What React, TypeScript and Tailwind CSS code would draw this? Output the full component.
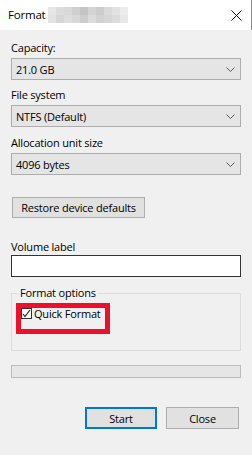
import React from 'react';

const font = { fontFamily: '"Open Sans", "Noto Sans", sans-serif' };

const Chevron: React.FC = () => (
  <svg width="9" height="5" viewBox="0 0 9 5" className="shrink-0">
    <polyline points="0.5,0.5 4.5,4.5 8.5,0.5" fill="none" stroke="#5a5a5a" strokeWidth="1" />
  </svg>
);

const Combo: React.FC<{ value: string }> = ({ value }) => (
  <div className="flex h-[22px] items-center justify-between border border-[#adadad] bg-[#e5e5e5] pl-[4px] pr-[5px]">
    <span className="text-[11px] tracking-[-0.2px] leading-none text-black">{value}</span>
    <Chevron />
  </div>
);

const Label: React.FC<{ text: string; className?: string }> = ({ text, className }) => (
  <div className={`h-[15px] text-[11px] tracking-[-0.2px] leading-[15px] text-black ${className ?? ''}`}>{text}</div>
);

// pixelated blur blocks that hide the drive name in the title
const blur = [
  ['#e6e6e6', '#dcdcdc', '#d9d9d9', '#cfcfcf', '#c4c4c4', '#d4d4d4', '#cccccc', '#dadada', '#e2e2e2', '#ececec'],
  ['#e2e2e2', '#d6d6d6', '#dedede', '#d8d8d8', '#cdcdcd', '#dcdcdc', '#d2d2d2', '#d6d6d6', '#dcdcdc', '#e8e8e8'],
];

const App: React.FC = () => {
  return (
    <div className="w-[252px] h-[455px] bg-[#f0f0f0] overflow-hidden" style={font}>
      <div className="flex h-[30px] items-center bg-white pl-[8px] pr-[9px] border-r border-[#8a8a8a]">
        <span className="w-[40px] text-[11.5px] tracking-[-0.2px] text-black">Format</span>
        <div className="flex flex-col">
          {blur.map((row, i) => (
            <div key={i} className="flex">
              {row.map((c, j) => (
                <div key={j} className="h-[8px] w-[8px]" style={{ backgroundColor: c }} />
              ))}
            </div>
          ))}
        </div>
        <svg width="11" height="11" viewBox="0 0 11 11" className="ml-auto">
          <path d="M0.5 0.5 L10.5 10.5 M10.5 0.5 L0.5 10.5" stroke="#111" strokeWidth="1" />
        </svg>
      </div>

      <div className="flex flex-col px-[11px]">
        <Label text="Capacity:" className="mt-[10px]" />
        <div className="mt-[3px]">
          <Combo value="21.0 GB" />
        </div>

        <Label text="File system" className="mt-[7px]" />
        <div className="mt-[3px]">
          <Combo value="NTFS (Default)" />
        </div>

        <Label text="Allocation unit size" className="mt-[8px]" />
        <div className="mt-[3px]">
          <Combo value="4096 bytes" />
        </div>

        <button className="mt-[22px] ml-[1px] h-[21px] w-[133px] border border-[#adadad] bg-[#e1e1e1] text-[11px] tracking-[-0.2px] leading-none text-black">
          Restore device defaults
        </button>

        <Label text="Volume label" className="mt-[21px]" />
        <div className="mt-[1px] h-[22px] border border-[#333] bg-white" />

        <div className="relative mt-[16px] h-[58px] border border-[#dcdcdc]">
          <span className="absolute -top-[9px] left-[6px] bg-[#f0f0f0] px-[2px] text-[11px] tracking-[-0.2px] leading-[15px] text-black">
            Format options
          </span>
          <div className="mt-[14px] ml-[9px] flex items-center gap-[2px]">
            <svg width="11" height="11" viewBox="0 0 11 11">
              <rect x="0.5" y="0.5" width="10" height="10" fill="#fff" stroke="#333" />
              <polyline points="2,6 4,8.5 9,2" fill="none" stroke="#222" strokeWidth="1.2" />
            </svg>
            <span className="text-[11px] tracking-[-0.2px] leading-none text-black">Quick Format</span>
          </div>
          {/* red annotation box */}
          <div className="absolute left-[4px] top-[9px] h-[31px] w-[94px] border-[5px] border-[#ee0f2a]" />
        </div>

        <div className="mt-[14px] h-[13px] border border-[#bcbcbc] bg-[#e6e6e6]" />

        <div className="mt-[29px] flex justify-end gap-[9px] pr-[2px]">
          <button className="h-[22px] w-[72px] border-2 border-[#0078d7] bg-[#e1e1e1] text-[11px] tracking-[-0.2px] leading-none text-black">
            Start
          </button>
          <button className="h-[22px] w-[73px] border border-[#adadad] bg-[#e1e1e1] text-[11px] tracking-[-0.2px] leading-none text-black">
            Close
          </button>
        </div>
      </div>
    </div>
  );
};

export default App;
